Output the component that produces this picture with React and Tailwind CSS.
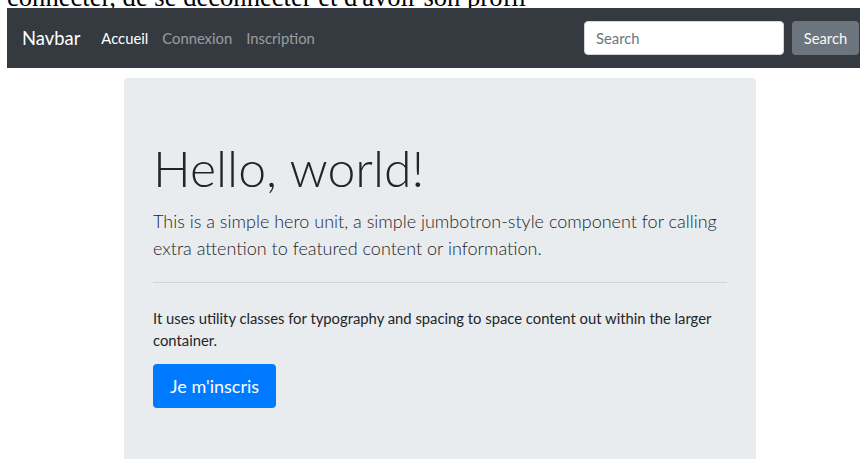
import React from 'react'

const links = [
    { label: 'Accueil', active: true },
    { label: 'Connexion', active: false },
    { label: 'Inscription', active: false },
]

const Navbar = () => {
    return (
        <nav className="ml-[7px] h-[60px] bg-[#343a40] flex items-center pl-[15px] pr-[1px]">
            <a href="#" className="text-white text-[18.4px] leading-[27px] mr-[14px]">Navbar</a>
            <ul className="flex items-center">
                {links.map((link) => (
                    <li key={link.label}>
                        <a
                            href="#"
                            className={
                                link.active
                                    ? 'block px-[7px] text-[14.8px] leading-[22px] text-white'
                                    : 'block px-[7px] text-[14.8px] leading-[22px] text-white/50'
                            }
                        >
                            {link.label}
                        </a>
                    </li>
                ))}
            </ul>
            <form className="ml-auto flex items-center" onSubmit={(e) => e.preventDefault()}>
                <input
                    type="search"
                    placeholder="Search"
                    className="w-[200px] h-[34px] bg-white rounded-[4px] border border-[#ced4da] px-[11px] text-[14.8px] text-[#495057] placeholder:text-[#6c757d] outline-none"
                />
                <button
                    type="submit"
                    className="ml-[8px] w-[67px] h-[34px] flex items-center justify-center bg-[#6c757d] rounded-[4px] text-[14.8px] text-[#f8f9fa]"
                >
                    Search
                </button>
            </form>
        </nav>
    )
}

const Jumbotron = () => {
    return (
        <div className="ml-[124px] w-[632px] mt-[10px] bg-[#e9ecef] rounded-t-[4px] px-[29px] pt-[60px] pb-[58px] text-[#212529]">
            <h1 className="text-[50px] leading-[60px] font-light">Hello, world!</h1>
            <p className="mt-[10px] text-[18px] leading-[27px] font-light">
                This is a simple hero unit, a simple jumbotron-style component for calling extra attention to featured content or information.
            </p>
            <hr className="mt-[20px] border-t border-black/10" />
            <p className="mt-[24px] text-[14.8px] leading-[22px]">
                It uses utility classes for typography and spacing to space content out within the larger container.
            </p>
            <button className="mt-[13px] h-[44px] px-[17px] bg-[#007bff] rounded-[4px] text-white text-[18px]">
                Je m'inscris
            </button>
        </div>
    )
}

const App = () => {
    return (
        <div className="h-screen overflow-hidden bg-white font-['Lato',sans-serif]">
            <div className="h-[8px] overflow-hidden font-['Liberation_Serif',serif] text-black">
                <p className="ml-[7px] -mt-[17px] text-[26.6px] leading-[28px] whitespace-nowrap">
                    connecter, de se déconnecter et d'avoir son profil
                </p>
            </div>
            <Navbar />
            <Jumbotron />
        </div>
    )
}

export default App
